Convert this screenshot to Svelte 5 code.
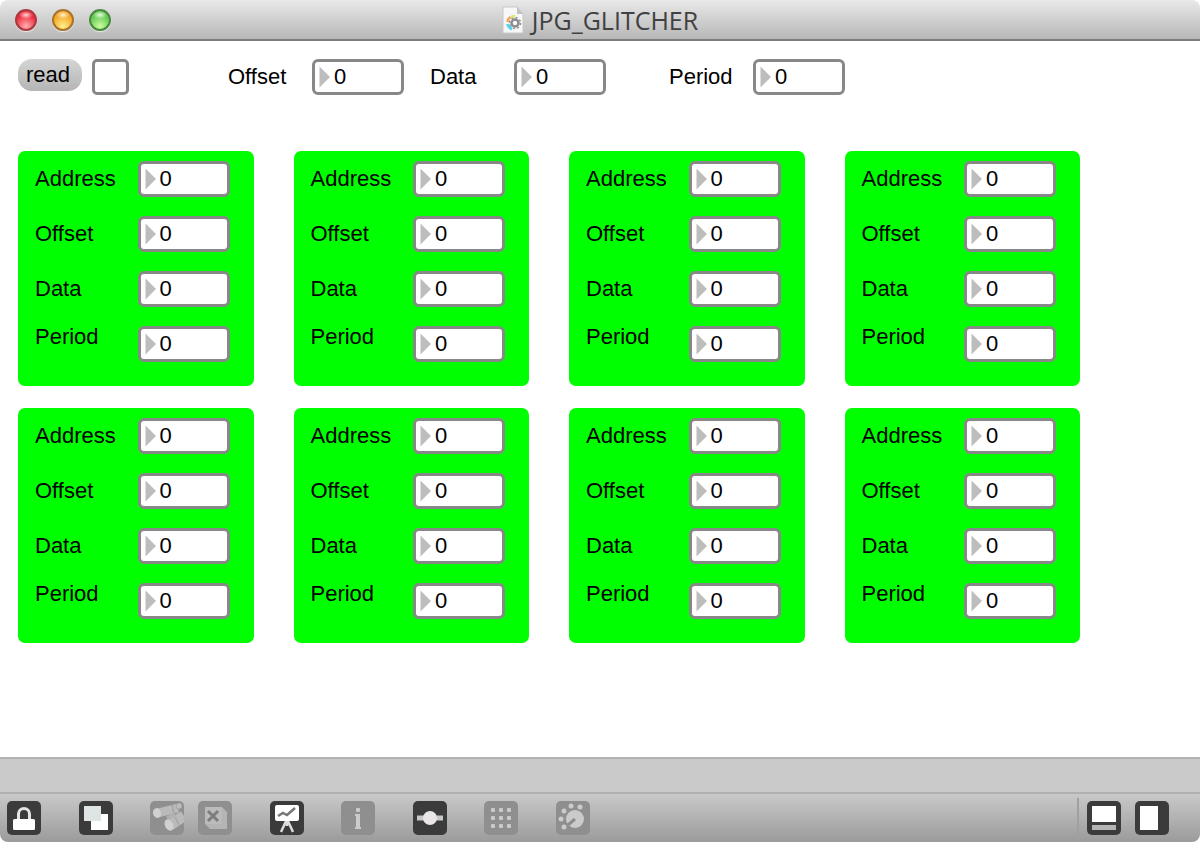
<script>
    const CARDS = 8;
    const FIELDS = ['Address', 'Offset', 'Data', 'Period'];

    let master = $state({ Offset: 0, Data: 0, Period: 0 });
    let slots = $state(
        Array.from({ length: CARDS }, () => ({
            Address: 0,
            Offset: 0,
            Data: 0,
            Period: 0,
        }))
    );
    let enabled = $state(false);
</script>

{#snippet numberBox(id, values, key)}
    <span class="number">
        <svg viewBox="0 0 12 22" aria-hidden="true">
            <path d="M0.5 0.5 11 11 0.5 21.5z" fill="#bdbdbd" />
        </svg>
        <input {id} type="text" inputmode="numeric" bind:value={values[key]} />
    </span>
{/snippet}

<div class="window">
    <header>
        <div class="lights">
            <button class="light red" aria-label="Close"></button>
            <button class="light amber" aria-label="Minimize"></button>
            <button class="light green" aria-label="Zoom"></button>
        </div>
        <h1>
            <svg width="22" height="28" viewBox="0 0 22 28" aria-hidden="true">
                <path d="M1 1h14l6 7v19H1z" fill="#f7f7f7" stroke="#c8c8c8" />
                <path d="M15 1v7h6z" fill="#c2c2c2" />
                <circle cx="13" cy="17" r="3.500" fill="none" stroke="#8c8c8c" stroke-width="2.500" />
                <circle cx="13" cy="17" r="5.500" fill="none" stroke="#8c8c8c" stroke-width="1.500" stroke-dasharray="2 2.300" />
                <path d="M5.500 16a7 7 0 0 1 3-5" fill="none" stroke="#f0a45c" stroke-width="2.500" />
                <path d="M9 11a7 7 0 0 1 4-1" fill="none" stroke="#e3e56c" stroke-width="2.500" />
                <path d="M5.500 18a7 7 0 0 0 4.500 5" fill="none" stroke="#55d5ee" stroke-width="3" />
            </svg>
            JPG_GLITCHER
        </h1>
    </header>

    <main>
        <div class="controls">
            <button class="message">read</button>
            <input class="toggle" type="checkbox" aria-label="Enable" bind:checked={enabled} />
            {#each Object.keys(master) as key}
                <div class="master {key.toLowerCase()}">
                    <label for="master-{key}">{key}</label>
                    {@render numberBox(`master-${key}`, master, key)}
                </div>
            {/each}
        </div>

        <div class="cards">
            {#each slots as slot, idx}
                <section class="card">
                    {#each FIELDS as key}
                        <div class="row">
                            <label for="slot-{idx}-{key}">{key}</label>
                            {@render numberBox(`slot-${idx}-${key}`, slot, key)}
                        </div>
                    {/each}
                </section>
            {/each}
        </div>
    </main>

    <div class="status"></div>

    <footer>
        <div class="tools">
            <button class="tool" aria-label="Lock">
                <svg viewBox="0 0 34 34">
                    <path d="M11.5 18v-5a5.5 5.5 0 0 1 11 0v5" fill="none" stroke="#e4e4e4" stroke-width="3" />
                    <rect x="6" y="18" width="22" height="11" rx="1.5" fill="#fff" />
                </svg>
            </button>
            <button class="tool" aria-label="New view">
                <svg viewBox="0 0 34 34">
                    <rect x="12" y="13" width="17" height="16" fill="#fff" />
                    <rect x="5" y="5" width="17" height="15" fill="#dfe5e4" />
                </svg>
            </button>
            <div class="pair">
                <button class="tool dim" aria-label="Probe" disabled>
                    <svg viewBox="0 0 34 34">
                        <path d="M8 12 28 7" stroke="#bababa" stroke-width="9" />
                        <path d="M20 24 34 15" stroke="#bababa" stroke-width="11" />
                        <path d="m17 17 8-4" stroke="#b0b0b0" stroke-width="4" />
                        <ellipse cx="7" cy="12" rx="4" ry="5" fill="#d0d0d0" transform="rotate(-14 7 12)" />
                        <ellipse cx="19" cy="24" rx="4" ry="6" fill="#d0d0d0" transform="rotate(-28 19 24)" />
                        <path d="m22 4 2 8m1 4 4 8" stroke="#a5a5a5" stroke-width="1.5" />
                        <circle cx="29" cy="5" r="3" fill="#bdbdbd" stroke="#a2a2a2" />
                    </svg>
                </button>
                <button class="tool dim" aria-label="Clear" disabled>
                    <svg viewBox="0 0 34 34">
                        <path d="M7 6h17l5 5v17H12l-5-5z" fill="#b4b4b4" />
                        <path d="M7 6h17v17H7z" fill="#bbb" />
                        <path d="m10 10 10 10m0-10-10 10" stroke="#7c7c7c" stroke-width="3" />
                    </svg>
                </button>
            </div>
            <button class="tool" aria-label="Presentation">
                <svg viewBox="0 0 34 34">
                    <path d="m17 18-6 13m6-13 6 13m-6-13v7" fill="none" stroke="#ddd" stroke-width="2.5" />
                    <rect x="5" y="4" width="24" height="16" rx="2" fill="#fff" />
                    <path d="m8 15 5-3 4 2 8-7" fill="none" stroke="#777" stroke-width="2.5" />
                </svg>
            </button>
            <button class="tool dim" aria-label="Inspector" disabled>
                <svg viewBox="0 0 34 34">
                    <rect x="15" y="7" width="4" height="4" rx="1" fill="#cbcbcb" />
                    <path d="M14 13h5v13h1v2h-6v-2h1V15h-1z" fill="#cbcbcb" />
                </svg>
            </button>
            <button class="tool" aria-label="Patch cords">
                <svg viewBox="0 0 34 34">
                    <path d="M4 17h26" stroke="#c8c8c8" stroke-width="5" />
                    <circle cx="17" cy="17" r="7" fill="#ebe6e6" />
                </svg>
            </button>
            <button class="tool dim" aria-label="Grid" disabled>
                <svg viewBox="0 0 34 34">
                    {#each [9, 17, 25] as y}
                        {#each [9, 17, 25] as x}
                            <rect x={x - 2} y={y - 2} width="4" height="4" rx="1" fill="#cbcbcb" />
                        {/each}
                    {/each}
                </svg>
            </button>
            <button class="tool dim" aria-label="Parameters" disabled>
                <svg viewBox="0 0 34 34">
                    <circle cx="19" cy="18" r="9" fill="#cbcbcb" />
                    <path d="m12 24 7-6" stroke="#8d8d8d" stroke-width="3" />
                    <g fill="#cbcbcb">
                        <circle cx="8" cy="26" r="2.5" />
                        <circle cx="5" cy="18" r="2.5" />
                        <circle cx="8" cy="10" r="2.5" />
                        <circle cx="15" cy="5" r="2.5" />
                        <circle cx="24" cy="6" r="2.5" />
                    </g>
                </svg>
            </button>
        </div>
        <div class="panels">
            <button class="tool" aria-label="Bottom panel">
                <svg viewBox="0 0 34 34">
                    <rect x="5" y="5" width="24" height="16" fill="#fff" />
                    <rect x="5" y="24" width="24" height="5" fill="#b5b5b5" />
                </svg>
            </button>
            <button class="tool" aria-label="Side panel">
                <svg viewBox="0 0 34 34">
                    <rect x="5" y="5" width="18" height="24" fill="#fff" />
                </svg>
            </button>
        </div>
    </footer>
</div>

<style>
    :global(body) {
        margin: 0;
        background: #fff;
    }

    .window {
        display: flex;
        flex-direction: column;
        box-sizing: border-box;
        min-height: 100vh;
        overflow: hidden;
        border-radius: 8px;
        background: #fff;
        color: #000;
        font: 22px/22px 'Liberation Sans', Arial, sans-serif;
    }

    button,
    input {
        margin: 0;
        padding: 0;
        border: 0;
        color: inherit;
        font: inherit;
    }

    header {
        display: grid;
        grid-template-columns: 1fr auto 1fr;
        align-items: center;
        height: 39px;
        border-bottom: 2px solid #7c7c7c;
        background: linear-gradient(#e9e9e9, #b7b7b7);
    }

    .lights {
        display: flex;
        gap: 15px;
        padding-left: 15px;
    }

    .light {
        box-sizing: border-box;
        width: 22px;
        height: 22px;
        border-radius: 50%;
        box-shadow: 0 1px 1px #eee;
    }

    .red {
        border: 2px solid #a83a40;
        background: radial-gradient(ellipse 7px 4px at 50% 22%, #ffd5d8, transparent),
            radial-gradient(circle at 50% 85%, #ffb0b2, #ee2c3c 65%);
    }

    .amber {
        border: 2px solid #a8732a;
        background: radial-gradient(ellipse 7px 4px at 50% 22%, #fff0cc, transparent),
            radial-gradient(circle at 50% 85%, #fff08c, #f4a626 65%);
    }

    .green {
        border: 2px solid #4a8a3c;
        background: radial-gradient(ellipse 7px 4px at 50% 22%, #e6ffdd, transparent),
            radial-gradient(circle at 50% 85%, #c8ff9c, #65c655 65%);
    }

    h1 {
        display: flex;
        align-items: center;
        gap: 8px;
        margin: 0;
        color: #414141;
        font: 25px/32px 'Open Sans', sans-serif;
    }

    main {
        flex: 1;
        padding: 18px 10% 18px 18px;
    }

    .controls {
        display: flex;
        align-items: flex-start;
        margin-bottom: 56px;
    }

    .message {
        width: 64px;
        height: 32px;
        padding-right: 4px;
        border-radius: 14px;
        background: linear-gradient(#d5d5d5, #b5b5b5);
    }

    .toggle {
        appearance: none;
        box-sizing: border-box;
        width: 37px;
        height: 36px;
        margin-left: 10px;
        border: 3px solid #888;
        border-radius: 5px;
        background: #fff;
    }

    .toggle:checked {
        background: #888;
    }

    .master {
        display: flex;
        align-items: center;
    }

    .master label {
        width: 84px;
    }

    .master.offset {
        margin-left: 99px;
    }

    .master.data {
        margin-left: 26px;
    }

    .master.period {
        margin-left: 63px;
    }

    .number {
        display: flex;
        align-items: center;
        gap: 3px;
        box-sizing: border-box;
        width: 92px;
        height: 36px;
        padding-left: 4px;
        border: 3px solid #888;
        border-radius: 6px;
        background: #fff;
    }

    .number svg {
        flex: none;
        width: 12px;
        height: 22px;
    }

    .number input {
        flex: 1;
        min-width: 0;
        background: none;
        outline: none;
    }

    .cards {
        display: grid;
        grid-template-columns: repeat(4, 1fr);
        gap: 22px 40px;
    }

    .card {
        display: flex;
        flex-direction: column;
        gap: 19px;
        padding: 10px 24px 24px 17px;
        border-radius: 7px;
        background: #00ff00;
    }

    .row {
        display: flex;
        align-items: center;
        justify-content: space-between;
    }

    .row:last-child {
        align-items: flex-start;
    }

    .status {
        height: 33px;
        border-top: 2px solid #b2b2b2;
        background: #cacaca;
    }

    footer {
        display: flex;
        align-items: center;
        justify-content: space-between;
        height: 48px;
        padding: 0 31px 0 7px;
        border-top: 2px solid #b0b0b0;
        background: linear-gradient(#c9c9c9, #9b9b9b);
    }

    .tools {
        display: flex;
        justify-content: space-between;
        width: 583px;
    }

    .pair,
    .panels {
        display: flex;
        gap: 14px;
    }

    .panels {
        padding: 3px 0 3px 8px;
        border-left: 2px solid #a0a0a0;
    }

    .tool {
        width: 34px;
        height: 34px;
        border-radius: 5px;
        background: #3b3b3b;
    }

    .tool.dim {
        background: #8f8f8f;
    }

    .tool svg {
        display: block;
    }
</style>
